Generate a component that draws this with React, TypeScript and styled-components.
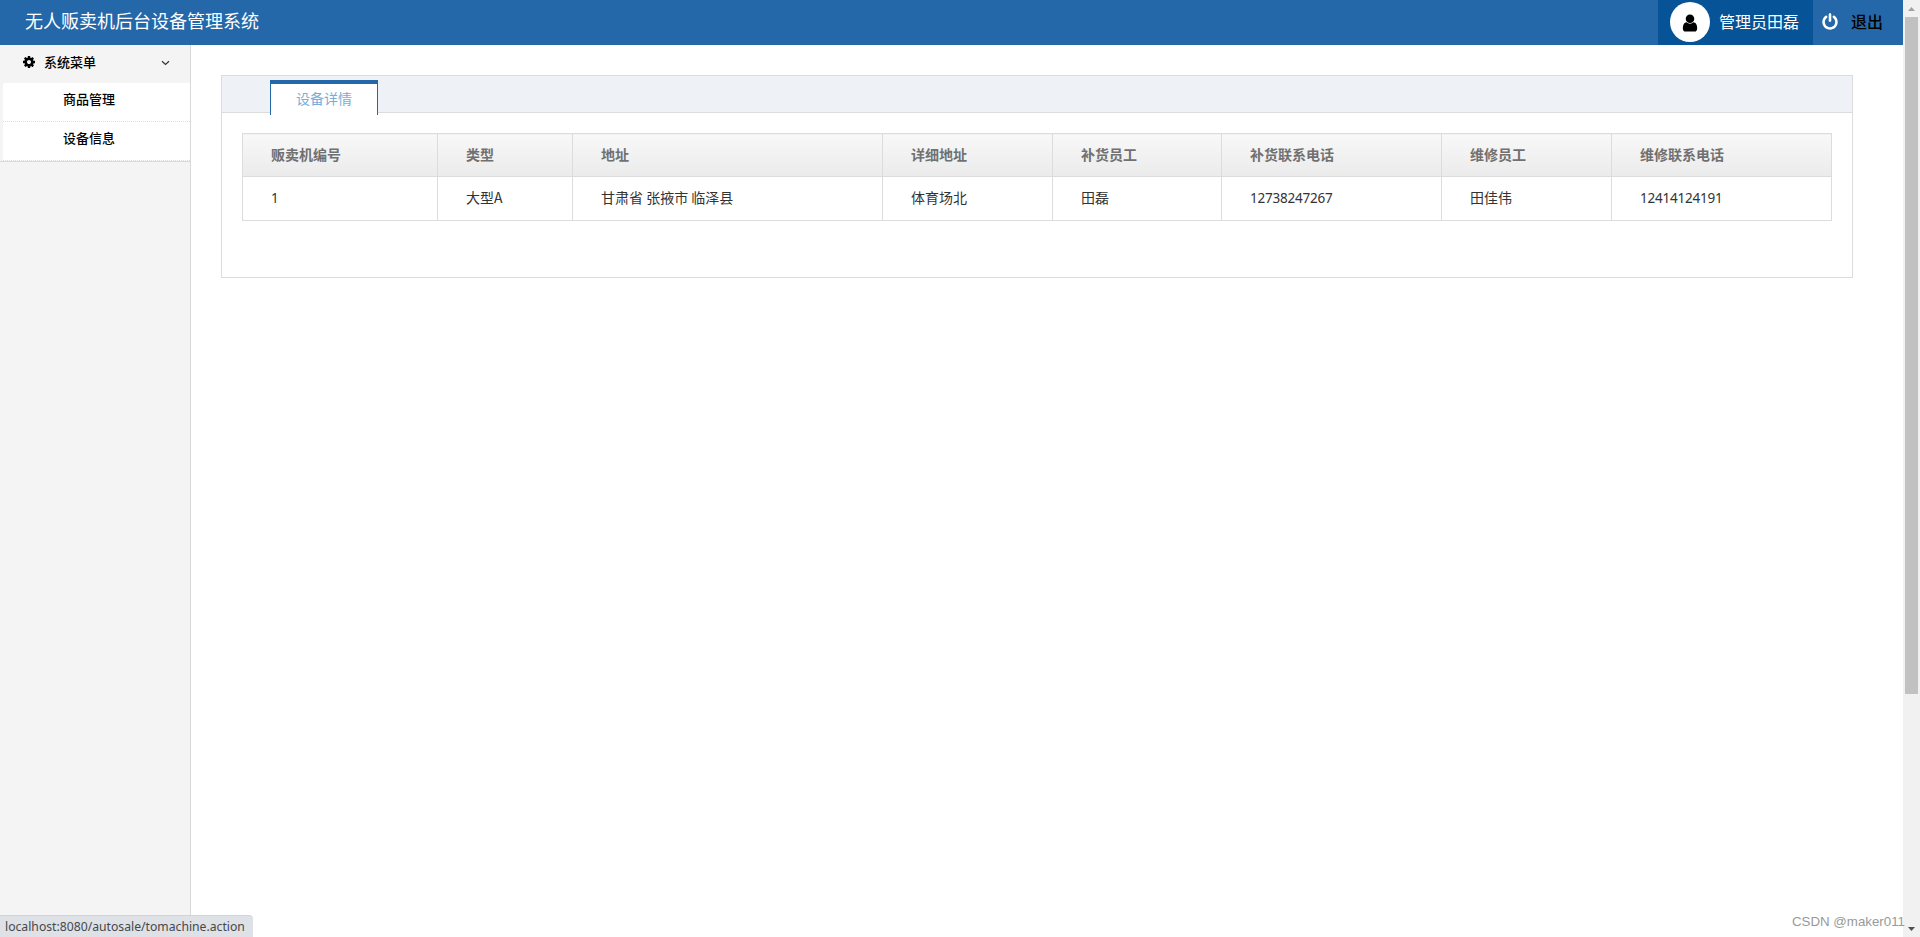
import React from 'react';
import styled, { createGlobalStyle } from 'styled-components';

const GlobalStyle = createGlobalStyle`
  *, *::before, *::after { box-sizing: border-box; }
  html, body { margin: 0; padding: 0; }
  body {
    background: #fff;
    overflow: hidden;
    font-family: "Noto Sans CJK SC", sans-serif;
    font-size: 14px;
    color: #333;
  }
`;

const Window = styled.div`
  position: relative;
  display: flex;
  height: 937px;
  overflow: hidden;
`;

const Page = styled.div`
  flex: 1;
  display: flex;
  flex-direction: column;
`;

const Header = styled.header`
  display: flex;
  height: 45px;
  background: #2468a9;
  color: #fff;
`;

const Title = styled.h1`
  flex: 1;
  margin: 0;
  padding-left: 25px;
  font-size: 18px;
  font-weight: 400;
  line-height: 40px;
`;

const UserBlock = styled.div`
  display: flex;
  width: 155px;
  padding: 2px 0 0 12px;
  background: #065397;
  font-size: 16px;
  line-height: 39px;
  white-space: nowrap;
`;

const Avatar = styled.span`
  display: flex;
  align-items: center;
  justify-content: center;
  width: 40px;
  height: 40px;
  margin-right: 9px;
  padding-top: 2px;
  border-radius: 50%;
  background: #fff;
  color: #000;
`;

const Logout = styled.a`
  display: flex;
  width: 90px;
  padding: 2px 0 0 8px;
  gap: 12px;
  font-size: 16px;
  font-weight: 500;
  line-height: 39px;
  color: #000;

  svg { margin-top: 11px; color: #fff; }
`;

const Body = styled.div`
  flex: 1;
  display: flex;
`;

const Sidebar = styled.nav`
  width: 191px;
  border-right: 1px solid #d9d9d9;
  background: #f4f4f4;
  color: #000;
  font-size: 13px;
  font-weight: 500;
`;

const MenuHead = styled.div`
  display: flex;
  align-items: center;
  height: 38px;
  padding: 0 20px 4px 22px;

  span { flex: 1; padding: 0 0 2px 8px; }
  svg:last-child { margin-top: 2px; }
`;

const SubMenu = styled.ul`
  margin: 0;
  padding: 0 0 0 3px;
  list-style: none;
  border-bottom: 1px solid #d9d9d9;
`;

const SubItem = styled.li`
  height: 39px;
  padding-left: 60px;
  border-bottom: 1px dotted #dcdcdc;
  background: #fff;
  line-height: 32px;
`;

const Main = styled.main`
  flex: 1;
  padding: 30px 50px 0 30px;
`;

const Panel = styled.section`
  height: 203px;
  border: 1px solid #dcdcdc;
`;

const TabBar = styled.div`
  height: 37px;
  padding: 4px 0 0 48px;
  border-bottom: 1px solid #dcdcdc;
  background: #eef2f7;
`;

const Tab = styled.div`
  width: 108px;
  height: 35px;
  border: solid #2468a9;
  border-width: 4px 1px 0;
  background: #fff;
  color: #77add9;
  line-height: 29px;
  text-align: center;
`;

const Table = styled.table`
  width: 1590px;
  margin: 20px 0 0 20px;
  border-collapse: collapse;
  table-layout: fixed;
`;

const HeadCell = styled.th<{ $width: number }>`
  width: ${(p) => p.$width}px;
  height: 43px;
  padding: 0 0 2px 28px;
  border: 1px solid #dcdcdc;
  background: linear-gradient(#f8f8f8, #ebebeb);
  color: #707070;
  font-weight: 700;
  line-height: 20px;
  text-align: left;
`;

const Cell = styled.td<{ $numeric?: boolean }>`
  height: 44px;
  padding: 0 0 ${(p) => (p.$numeric ? 2 : 4)}px 28px;
  border: 1px solid #dcdcdc;
  line-height: 20px;
  ${(p) => p.$numeric && 'font-family: "Noto Sans", sans-serif; font-size: 13.5px; letter-spacing: -0.22px;'}
`;

const Scrollbar = styled.div`
  display: flex;
  flex-direction: column;
  align-items: center;
  width: 17px;
  background: #f1f1f1;
`;

const Arrow = styled.span<{ $down?: boolean }>`
  display: flex;
  align-items: center;
  justify-content: center;
  height: 17px;
  color: ${(p) => (p.$down ? '#505050' : '#a3a3a3')};
  svg { transform: ${(p) => (p.$down ? 'none' : 'rotate(180deg)')}; }
`;

const Track = styled.div`
  flex: 1;
  width: 13px;
`;

const Thumb = styled.div`
  height: 677px;
  background: #c1c1c1;
`;

const StatusBubble = styled.div`
  position: absolute;
  left: 0;
  bottom: 0;
  width: 253px;
  height: 22px;
  padding-left: 5px;
  border: solid #d0d3d8;
  border-width: 1px 0 0;
  border-radius: 0 4px 0 0;
  background: #dee1e6;
  color: #46484c;
  font: 12.2px/22px "Noto Sans", sans-serif;
  white-space: nowrap;
`;

const Watermark = styled.div`
  position: absolute;
  right: 15px;
  bottom: 6px;
  color: #999;
  font: 13.3px/18px "Liberation Sans", sans-serif;
`;

const paths = {
  cog: 'M1152 896q0-106-75-181t-181-75-181 75-75 181 75 181 181 75 181-75 75-181zm512-109v222q0 12-8 23t-20 13l-185 28q-19 54-39 91 35 50 107 138 10 12 10 25t-9 23q-27 37-99 108t-94 71q-12 0-26-9l-138-108q-44 23-91 38-16 136-29 186-7 28-36 28h-222q-14 0-24.5-8.5t-11.5-21.5l-28-184q-49-16-90-37l-141 107q-10 9-25 9-14 0-25-11-126-114-165-168-7-10-7-23 0-12 8-23 15-21 51-66.5t54-70.5q-27-50-41-99l-183-27q-13-2-21-12.5t-8-23.5v-222q0-12 8-23t19-13l186-28q14-46 39-92-40-57-107-138-10-12-10-24 0-10 9-23 26-36 98.5-107.5t94.5-71.5q13 0 26 10l138 107q44-23 91-38 16-136 29-186 7-28 36-28h222q14 0 24.5 8.5t11.5 21.5l28 184q49 16 90 37l142-107q9-9 24-9 13 0 25 10 129 119 165 170 7 8 7 22 0 12-8 23-15 21-51 66.5t-54 70.5q26 50 41 98l183 28q13 2 21 12.5t8 23.5z',
  user: 'M1536 1399q0 109-62.5 187t-150.5 78h-854q-88 0-150.5-78t-62.5-187q0-85 8.5-160.5t31.5-152 58.5-131 94-89 134.5-34.5q131 128 313 128t313-128q76 0 134.5 34.5t94 89 58.5 131 31.5 152 8.5 160.5zm-256-887q0 159-112.5 271.5t-271.5 112.5-271.5-112.5-112.5-271.5 112.5-271.5 271.5-112.5 271.5 112.5 112.5 271.5z',
  power: 'M1664 896q0 156-61 298t-164 245-245 164-298 61-298-61-245-164-164-245-61-298q0-182 80.5-343t226.5-270q43-32 95.5-25t83.5 50q32 42 24.5 94.5t-49.5 84.5q-98 74-151.5 181t-53.5 228q0 104 40.5 198.5t109.5 163.5 163.5 109.5 198.5 40.5 198.5-40.5 163.5-109.5 109.5-163.5 40.5-198.5q0-121-53.5-228t-151.5-181q-42-32-49.5-84.5t24.5-94.5q31-43 84-50t95 25q146 109 226.5 270t80.5 343zm-640-768v640q0 52-38 90t-90 38-90-38-38-90v-640q0-52 38-90t90-38 90 38 38 90z',
};

function Icon({ name, size }: { name: keyof typeof paths; size: number }) {
  return (
    <svg width={size} height={size} viewBox="0 0 1792 1792" fill="currentColor">
      <path d={paths[name]} />
    </svg>
  );
}

function Triangle() {
  return (
    <svg width="7" height="4" viewBox="0 0 7 4" fill="currentColor">
      <path d="M0 0h7L3.5 4z" />
    </svg>
  );
}

const columns = [
  { label: '贩卖机编号', width: 195, value: '1', numeric: true },
  { label: '类型', width: 135, value: '大型A' },
  { label: '地址', width: 310, value: '甘肃省 张掖市 临泽县' },
  { label: '详细地址', width: 170, value: '体育场北' },
  { label: '补货员工', width: 169, value: '田磊' },
  { label: '补货联系电话', width: 220, value: '12738247267', numeric: true },
  { label: '维修员工', width: 170, value: '田佳伟' },
  { label: '维修联系电话', width: 220, value: '12414124191', numeric: true },
];

export default function App() {
  return (
    <>
      <GlobalStyle />
      <Window>
        <Page>
          <Header>
            <Title>无人贩卖机后台设备管理系统</Title>
            <UserBlock>
              <Avatar><Icon name="user" size={20} /></Avatar>
              管理员田磊
            </UserBlock>
            <Logout><Icon name="power" size={18} />退出</Logout>
          </Header>
          <Body>
            <Sidebar>
              <MenuHead>
                <Icon name="cog" size={14} />
                <span>系统菜单</span>
                <svg width="9" height="6" viewBox="0 0 9 6" fill="none" stroke="#333" strokeWidth="1.2">
                  <path d="M1 1.2l3.5 3.3L8 1.2" />
                </svg>
              </MenuHead>
              <SubMenu>
                <SubItem>商品管理</SubItem>
                <SubItem>设备信息</SubItem>
              </SubMenu>
            </Sidebar>
            <Main>
              <Panel>
                <TabBar><Tab>设备详情</Tab></TabBar>
                <Table>
                  <thead>
                    <tr>
                      {columns.map((c) => <HeadCell key={c.label} $width={c.width}>{c.label}</HeadCell>)}
                    </tr>
                  </thead>
                  <tbody>
                    <tr>
                      {columns.map((c) => <Cell key={c.label} $numeric={c.numeric}>{c.value}</Cell>)}
                    </tr>
                  </tbody>
                </Table>
              </Panel>
            </Main>
          </Body>
        </Page>
        <Scrollbar>
          <Arrow><Triangle /></Arrow>
          <Track><Thumb /></Track>
          <Arrow $down><Triangle /></Arrow>
        </Scrollbar>
        <StatusBubble>localhost:8080/autosale/tomachine.action</StatusBubble>
        <Watermark>CSDN @maker011</Watermark>
      </Window>
    </>
  );
}
